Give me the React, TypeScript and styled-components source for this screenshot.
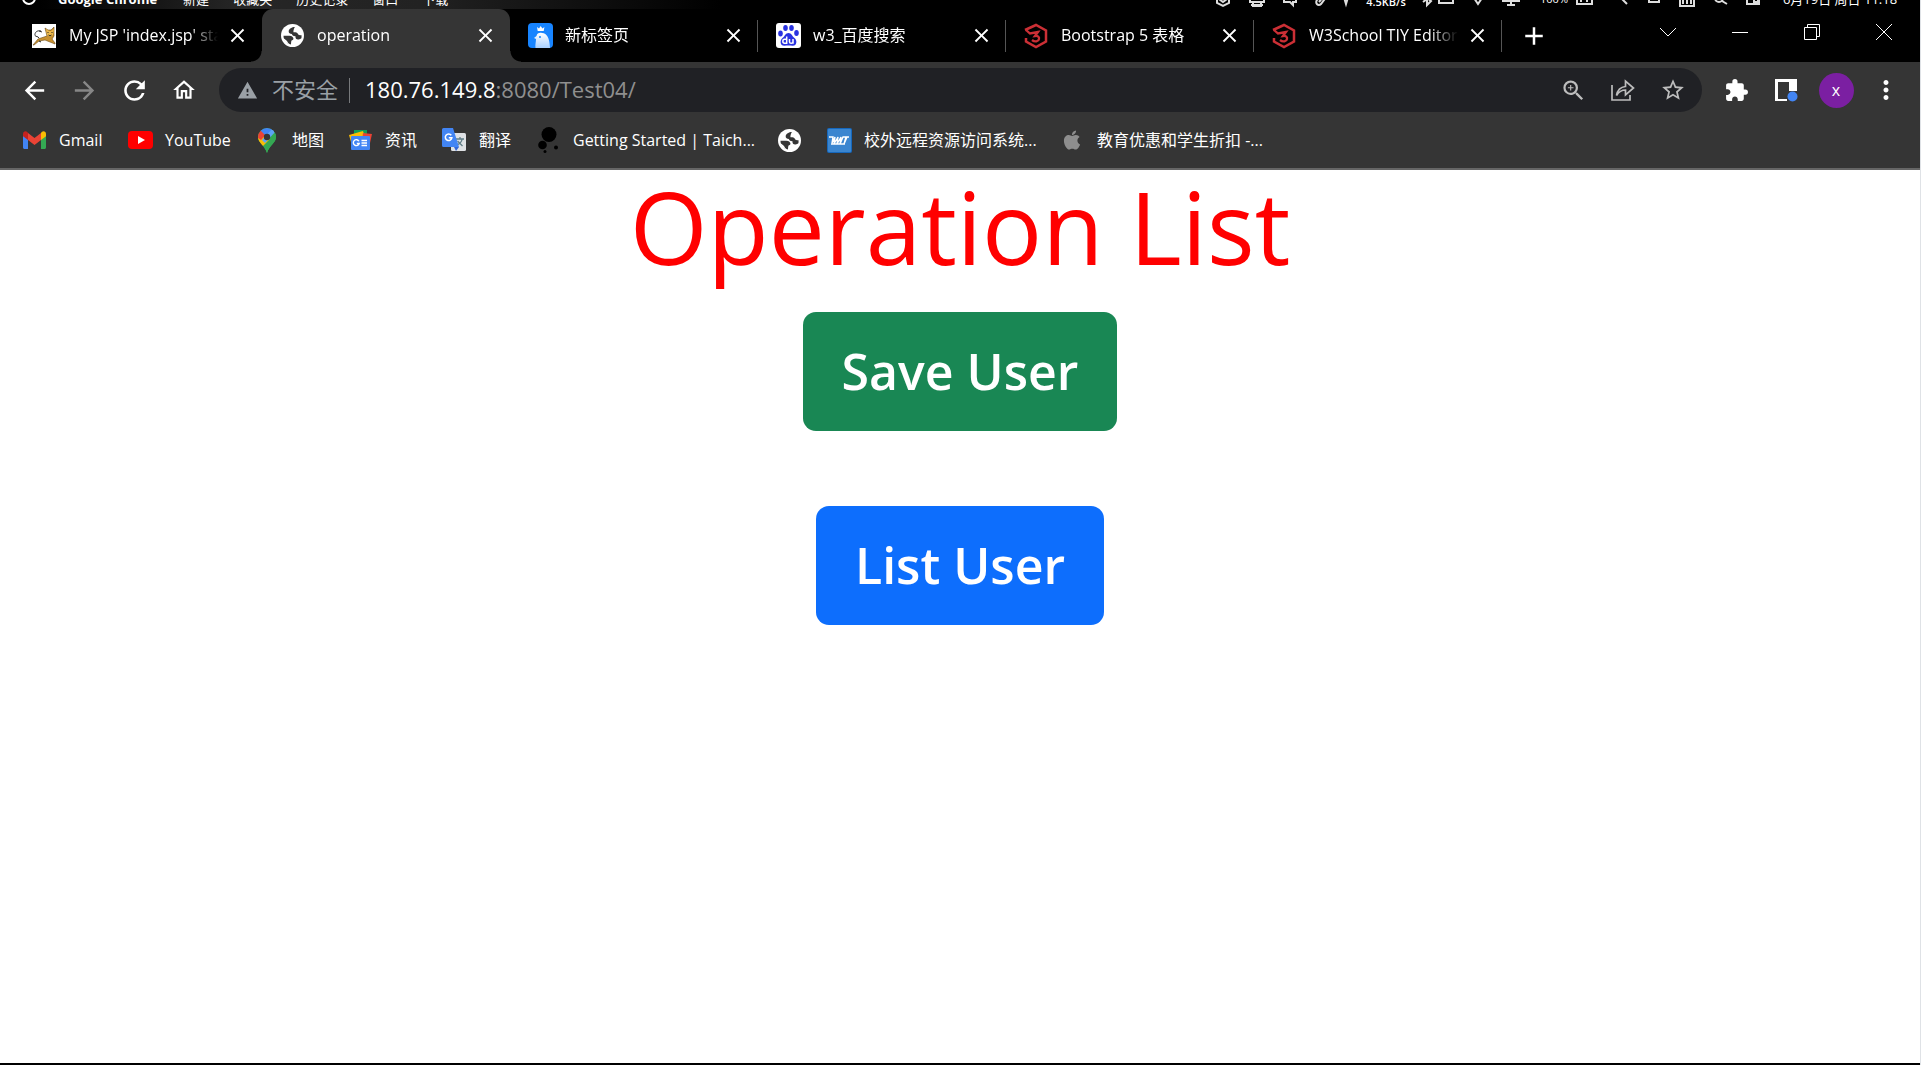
import React from "react";
import styled, { createGlobalStyle } from "styled-components";
import {
  MdArrowBack, MdArrowForward, MdRefresh, MdOutlineHome, MdWarning, MdZoomIn,
  MdStarBorder, MdExtension, MdMoreVert, MdClose, MdAdd,
} from "react-icons/md";
import { FaApple } from "react-icons/fa";

const ui = `"Open Sans", "Noto Sans CJK SC", sans-serif`;

const Global = createGlobalStyle`
  * { box-sizing: border-box; }
  html, body { margin: 0; background: #fff; }
  body { font-family: ${ui}; overflow: hidden; }
  button { font: inherit; color: inherit; background: none; border: 0; padding: 0; cursor: pointer; }
  svg { display: block; flex: none; }
`;

const Screen = styled.div`
  min-height: 100vh;
  display: flex;
  flex-direction: column;
  border-right: 1px solid #dfe2e6;
  color: #fff;
`;

const MenuBar = styled.header`
  height: 9px;
  overflow: hidden;
  display: flex;
  justify-content: space-between;
  align-items: flex-end;
  padding: 0 10px 0 20px;
  background: linear-gradient(90deg, #000 0, #000 40px, #262626 240px, #222 420px, #000 720px);
  font-size: 13px;
  line-height: 20px;
  white-space: nowrap;
`;
const MenuItems = styled.nav`
  display: flex;
  align-items: center;
  gap: 24px;
  height: 20px;
`;
const AppName = styled.strong`
  margin: 0 2px 0 -4px;
  font-weight: 700;
`;
const Tray = styled.div`
  display: flex;
  align-items: center;
  height: 20px;
`;
const TrayCell = styled.span<{ $w: number }>`
  width: ${(p) => p.$w}px;
  display: flex;
  justify-content: center;
`;
const Charge = styled.span`
  width: 46px;
  text-align: right;
  font-size: 11px;
`;
const Speed = styled.span`
  width: 64px;
  height: 20px;
  padding-top: 3px;
  font-size: 11px;
  font-weight: 600;
  text-align: center;
`;

const TabStrip = styled.div`
  height: 53px;
  display: flex;
  background: #000;
  padding-left: 14px;
`;
const Tab = styled.div<{ $active?: boolean; $line?: boolean }>`
  position: relative;
  flex: 0 1 248px;
  min-width: 0;
  display: flex;
  align-items: center;
  gap: 5px;
  padding: 0 13px 0 17px;
  border-radius: 11px 11px 0 0;
  background: ${(p) => (p.$active ? "#353535" : "transparent")};
  &::before, &::after {
    content: ${(p) => (p.$active ? '""' : "none")};
    position: absolute;
    bottom: 0;
    width: 11px;
    height: 11px;
  }
  &::before {
    left: -11px;
    background: radial-gradient(circle at 0 0, transparent 10px, #353535 11px);
  }
  &::after {
    right: -11px;
    background: radial-gradient(circle at 100% 0, transparent 10px, #353535 11px);
  }
  ${(p) => p.$line && `&::after {
    content: ""; right: 0; bottom: 10px; width: 1px; height: 32px; background: #555;
  }`}
`;
const TabTitle = styled.span`
  flex: 1;
  overflow: hidden;
  white-space: nowrap;
  padding: 0 0 1px 7px;
  font-size: 16px;
  line-height: 24px;
  mask-image: linear-gradient(90deg, #000 calc(100% - 32px), transparent calc(100% - 3px));
`;
const IconSlot = styled.span`
  flex: none;
  width: 26px;
  display: flex;
  justify-content: center;
`;
const TabClose = styled.button`
  display: flex;
`;
const NewTab = styled.button`
  width: 64px;
  display: grid;
  place-items: center;
`;
const WindowControls = styled.div`
  margin-left: auto;
  display: flex;
  height: 46px;
`;
const WindowButton = styled.button`
  width: 72px;
  display: grid;
  place-items: center;
`;

const Toolbar = styled.div`
  height: 56px;
  display: flex;
  align-items: center;
  background: #353535;
  padding: 0 9px;
`;
const ToolButton = styled.button<{ $dim?: boolean }>`
  width: 50px;
  height: 44px;
  display: grid;
  place-items: center;
  color: ${(p) => (p.$dim ? "#878787" : "#fff")};
`;
const Omnibox = styled.div`
  flex: 1;
  height: 44px;
  margin: 0 9px 0 10px;
  display: flex;
  align-items: center;
  border-radius: 22px;
  background: #202125;
  padding: 0 4px 0 18px;
  color: #9aa0a6;
  font-size: 22px;
  line-height: 30px;
`;
const Security = styled.button`
  display: flex;
  align-items: center;
  gap: 14px;
  padding-right: 11px;
  margin-right: 15px;
  height: 25px;
  border-right: 1px solid #77797c;
`;
const SecurityLabel = styled.span`
  padding-bottom: 2px;
`;
const Address = styled.a`
  flex: 1;
  padding-bottom: 2px;
  color: #8f8f8f;
  font-size: 22px;
  text-decoration: none;
  b { font-weight: 400; color: #fff; }
`;
const OmniButton = styled.button`
  width: 50px;
  display: grid;
  place-items: center;
  color: #bdbdbd;
`;
const Avatar = styled.span`
  width: 35px;
  height: 35px;
  border-radius: 50%;
  background: #7b1fa2;
  display: grid;
  place-items: center;
  font-size: 16px;
  line-height: 20px;
`;

const Bookmarks = styled.nav`
  height: 52px;
  display: flex;
  align-items: center;
  padding: 0 0 6px 21px;
  background: #353535;
  border-bottom: 2px solid #666;
`;
const Bookmark = styled.a<{ $w: number }>`
  flex: 0 1 ${(p) => p.$w}px;
  min-width: 0;
  display: flex;
  align-items: center;
  gap: 12px;
  color: #fff;
  text-decoration: none;
  white-space: nowrap;
  font-size: 16px;
  line-height: 24px;
`;
const BookmarkLabel = styled.span`
  padding-bottom: 1px;
`;

const Page = styled.main`
  flex: 1;
  display: flex;
  flex-direction: column;
  align-items: center;
  background: #fff;
  border-bottom: 2px solid #000;
`;
const Title = styled.h1`
  margin: 0 0 30px;
  font-size: 100px;
  font-weight: 400;
  line-height: 112px;
  color: #f00;
`;
const Action = styled.button<{ $color: string }>`
  && {
    background: ${(p) => p.$color};
    padding: 0 39px 2px;
    color: #fff;
    font-size: 50px;
    font-weight: 600;
    line-height: 80px;
  }
  height: 119px;
  margin-bottom: 75px;
  border-radius: 13px;
`;

const Globe = () => (
  <svg width="23" height="23" viewBox="0 0 24 24">
    <circle cx="12" cy="12" r="12" fill="#fff" />
    <path d="M14.500 3.200c-3 0-6.300 1.800-6.500 4.300-.1 2 1.500 2.800 3.300 3 .6 1.700 2 2.300 3.800 2.200-.2 2.300 1 3.600 3.200 3.400 1.300-.1 2.300-.6 3-1.300.3-1.500.2-2.300-.1-3.300-1.800.5-3 .1-3.600-1.300-1-1.500-2.800-1.700-4.600-1.500-.2-1.800.4-3.700 1.500-5.500z" fill="#353535" />
    <path d="M2.600 12.300h6.200c2.700.3 4.200 1.400 4.200 3.200-.2 1.200-1.200 1.600-2.200 1.900-.3 1.200-.2 2.400-.4 4C5.800 20.800 2.700 17 2.600 12.300z" fill="#353535" />
    <path d="M2.600 14.500c1.500 1.700 3 2 4 3.800.5 1.200 1.200 2 2.400 2.800C5.500 20.300 3 18 2.600 14.500z" fill="#fff" />
  </svg>
);
const Cat = () => (
  <svg width="24" height="24" viewBox="0 0 24 24">
    <path fill="#fff" d="M0 0h24v24H0z" />
    <path d="M9 7C5 6 2.500 8.500 3 11.500c1 1.500 3 .5 4 2.500M7 7l3 1" stroke="#333" fill="none" />
    <path d="M1 21l5-6 6-2 3-1-2-8 3 2h3l3-3v9l-2 3 3 4v1l-5-2-5-2-6 1-5 4z" fill="#c8912f" stroke="#6b4a16" strokeWidth=".6" />
    <path d="M14 5l3 2h2l3-2-1 6-3 2-3-2z" fill="#ecb94c" />
    <path d="M15.500 8l1 1M20.500 8l-1 1M16.500 11l1.500 1 1.500-1M7 17l2 1" stroke="#222" fill="none" />
  </svg>
);
const Bird = () => (
  <svg width="25" height="25" viewBox="0 0 25 25">
    <defs><linearGradient id="bird" x2="0" y2="1"><stop stopColor="#fff" /><stop offset="1" stopColor="#a8d0ff" /></linearGradient></defs>
    <rect width="25" height="25" rx="4" fill="#1784ff" />
    <path d="M9 4l2 1.500L12.700 3l1.700 2.500 2-1.500-.7 4h-6z" fill="#fff" />
    <path d="M6 15l2.500-2c.5-3 3-3.500 5.500-3 5 .5 7.500 4.500 8 15H7.500c-.5-3 .5-6 .5-9z" fill="url(#bird)" />
    <circle cx="12" cy="14" r="1" fill="#1784ff" />
  </svg>
);
const Baidu = () => (
  <svg width="25" height="25" viewBox="0 0 25 25">
    <rect width="25" height="25" rx="3" fill="#fff" />
    <g fill="#2932e1">
      <ellipse cx="4.500" cy="10.500" rx="2.300" ry="3" /><ellipse cx="9.500" cy="5" rx="2.300" ry="3" />
      <ellipse cx="15.500" cy="5" rx="2.300" ry="3" /><ellipse cx="20.500" cy="10" rx="2.300" ry="3" />
      <path d="M12.500 10c3 0 3.500 3 6 5 3 2.500 2.500 8-2 7.800-3-.3-5-.3-8 0-4.500.2-5-5.300-2-7.800 2.500-2 3-5 6-5z" />
    </g>
    <path d="M10.700 13.500v6.800H8.500c-2.200 0-2.200-4 0-4h2.200M13.500 16v3c0 1.800 3.500 1.800 3.500 0v-3 4.800" fill="none" stroke="#fff" strokeWidth="1.500" />
  </svg>
);
const W3 = () => (
  <svg width="24" height="26" viewBox="0 0 24 26" fill="none" stroke="#cb2f35" strokeWidth="2.500">
    <path d="M1 7L12 2l10 5.500v11L12 24 2 18.500V15" />
    <path d="M2 7l4 3.500 8-1.500-3 4c3-.5 4.500 1 4 3-.5 2.500-4 3.500-7 1" strokeWidth="2.300" />
  </svg>
);
const Gmail = () => (
  <svg width="23" height="18" viewBox="0 0 23 18">
    <path d="M0 4v12.500C0 17.300.7 18 1.500 18H5V8z" fill="#4285f4" />
    <path d="M18 8v10h3.500c.8 0 1.500-.7 1.500-1.500V4z" fill="#34a853" />
    <path d="M18 2v7l5-3.700V3c0-2.500-2.500-3.500-4.300-2z" fill="#fbbc04" />
    <path d="M5 9V2l6.500 5L18 2v7l-6.500 5z" fill="#ea4335" />
    <path d="M0 3v2.300L5 9V2L4.300 1C2.500-.5 0 .5 0 3z" fill="#c5221f" />
  </svg>
);
const YouTube = () => (
  <svg width="25" height="18" viewBox="0 0 25 18">
    <rect width="25" height="18" rx="4" fill="#f00" /><path d="M10 5l7 4-7 4z" fill="#fff" />
  </svg>
);
const MapPin = () => (
  <svg width="18" height="25" viewBox="0 0 18 25">
    <defs><clipPath id="pin"><path d="M9 0a9 9 0 0 1 9 9c0 6-6.500 8-9 16C6.500 17 0 15 0 9a9 9 0 0 1 9-9z" /></clipPath></defs>
    <g clipPath="url(#pin)">
      <path fill="#34a853" d="M0 0h18v25H0z" /><path fill="#fbbc04" d="M0 16V8l6-3 6 6-8 8z" />
      <path fill="#ea4335" d="M0 10V0l8 6-5 6z" /><path fill="#4285f4" d="M2 2l5 5 10-4V0H2z" /><path fill="#5da3f5" d="M18 3L7 15l-3-3L15 0h3z" />
      <path fill="#34a853" d="M18 5L4 20v5h14z" />
    </g>
    <circle cx="9" cy="9" r="3.200" fill="#353535" />
  </svg>
);
const News = () => (
  <svg width="23" height="20" viewBox="0 0 23 20">
    <path fill="#0f9d58" d="M5 0h13v8H5z" /><path fill="#fbbc04" d="M0 5l14-4 2 6L2 12z" /><path fill="#ea4335" d="M14 3l9 1-2 9-8-1z" />
    <rect x="2" y="6" width="19" height="14" rx="1" fill="#4285f4" />
    <path d="M10 11.300a3 3 0 1 0 .2 2.200H7.800M12.500 10.500H18M12.500 13H18M12.500 15.500H18" fill="none" stroke="#fff" strokeWidth="1.400" />
  </svg>
);
const Translate = () => (
  <svg width="24" height="24" viewBox="0 0 24 24">
    <rect x="9" y="5" width="15" height="18" rx="1.500" fill="#dfe2e5" />
    <path d="M14 11h8M18 9v2M20 11c0 3-3 5-5 6M15.500 13l5 5" stroke="#5f7d86" fill="none" strokeWidth="1.300" />
    <path d="M12 19h5l-3 4z" fill="#3367d6" />
    <path d="M1.500 0H11l6 19H1.500A1.500 1.500 0 0 1 0 17.500v-16A1.500 1.500 0 0 1 1.500 0z" fill="#4285f4" />
    <path d="M9.300 7.300a3.300 3.300 0 1 0 .6 2.400H6.800" fill="none" stroke="#fff" strokeWidth="1.500" />
  </svg>
);
const Taichi = () => (
  <svg width="20" height="26" viewBox="0 0 20 26">
    <circle cx="11" cy="7.500" r="7.500" /><circle cx="4.500" cy="18" r="4.300" /><circle cx="18" cy="20.500" r="2" /><circle cx="7" cy="24.500" r="1.500" />
  </svg>
);
const Campus = () => (
  <svg width="25" height="25" viewBox="0 0 25 25">
    <rect width="25" height="25" rx="2" fill="#1668bd" /><rect x="1" y="1" width="23" height="23" rx="1" fill="#3b86d0" />
    <path d="M2 9h4l-1 6 3-6-1 7 4-7-1 7 4-7-1 7 3-7h3l-2 7 3-7h2M4 16h14" stroke="#fff" strokeWidth="1.400" fill="none" />
  </svg>
);
const Share = () => (
  <svg width="24" height="24" viewBox="0 0 24 24" fill="none" stroke="currentColor" strokeWidth="1.700">
    <path d="M1 7v15h18v-5" /><path d="M5.500 17.500c1-6 4-8.500 9-9V3l8 7-8 7v-5c-4 0-6.500 1.500-9 5.500z" />
  </svg>
);
const SidePanel = () => (
  <svg width="23" height="23" viewBox="0 0 23 23">
    <path fill="#fff" d="M0 0h22v12h-8V3H3v17h9v2H0z" /><circle cx="17.500" cy="17.500" r="5" fill="#4285f4" />
  </svg>
);
const winIcons: Record<string, string> = {
  "Search tabs": "M0 4l8 8 8-8",
  Minimize: "M0 8.500h16",
  Restore: "M.5 3.500h12v12H.5zM3.500 3.500v-3h12v12h-3",
  Close: "M0 0l16 16M16 0L0 16",
};

type TrayIcon = [number, string];
const appIcons: TrayIcon[] = [
  [34, "M3 4l6-3 6 3v9l-6 3-6-3zM5 9l4 3 4-3"],
  [34, "M2 5h14v7H2zM5 12v4h8v-4M3 15h12"],
  [32, "M3 3h12v9h-3v3l-3-3H3z"],
  [32, "M14 6l-6 8c-3 3-6-1-4-4l5-7M6 12l5-6"],
  [16, "M6 4h6l-3 10z"],
];
const deviceIcons: TrayIcon[] = [
  [18, "M9 2l4 4-8 6M9 2v13l4-4-8-6"],
  [20, "M2 4h14v9H2zM3 8h12"],
  [44, "M3 5c4-3 8-3 12 0l-6 9z"],
  [22, "M1 3h16v8H1zM9 11v4M5 15h8"],
];
const systemIcons: TrayIcon[] = [
  [34, "M1 5h15v9H1zM5 7v5M11 7v5"],
  [36, "M3 8l4-4M8 6l8 8"],
  [32, "M4 4h10v8H4z"],
  [34, "M2 2h14v14H2zM5 10v4M9 10v4M13 10v4"],
  [32, "M12 8a4 4 0 1 1-8 0 4 4 0 0 1 8 0zM11 11l5 3"],
  [34, "M3 4h12v10H3zM10 8h4v4h-4z"],
];
const TrayIcons = ({ icons }: { icons: TrayIcon[] }) => (
  <>
    {icons.map(([w, d]) => (
      <TrayCell key={d} $w={w}>
        <svg width="18" height="18" viewBox="0 0 18 18" fill="none" stroke="#ddd" strokeWidth="2"><path d={d} /></svg>
      </TrayCell>
    ))}
  </>
);

const tabs = [
  { icon: <Cat />, title: "My JSP 'index.jsp' starting page" },
  { icon: <Globe />, title: "operation", active: true },
  { icon: <Bird />, title: "新标签页", line: true },
  { icon: <Baidu />, title: "w3_百度搜索", line: true },
  { icon: <W3 />, title: "Bootstrap 5 表格", line: true },
  { icon: <W3 />, title: "W3School TIY Editor", line: true },
];
const bookmarks = [
  { icon: <Gmail />, label: "Gmail", w: 106 },
  { icon: <YouTube />, label: "YouTube", w: 127 },
  { icon: <MapPin />, label: "地图", w: 93 },
  { icon: <News />, label: "资讯", w: 94 },
  { icon: <Translate />, label: "翻译", w: 94 },
  { icon: <Taichi />, label: "Getting Started | Taich...", w: 241 },
  { icon: <Globe />, label: "", w: 50 },
  { icon: <Campus />, label: "校外远程资源访问系统...", w: 233 },
  { icon: <FaApple size={22} color="#8e8e8e" />, label: "教育优惠和学生折扣 -...", w: 240 },
];

export default function App() {
  return (
    <Screen>
      <Global />
      <MenuBar>
        <MenuItems>
          <svg width="18" height="18" viewBox="0 0 18 18" fill="none" stroke="#fff" strokeWidth="2"><circle cx="9" cy="8" r="6" /></svg>
          <AppName>Google Chrome</AppName>
          <span>新建</span><span>收藏夹</span><span>历史记录</span><span>窗口</span><span>下载</span>
        </MenuItems>
        <Tray>
          <TrayIcons icons={appIcons} />
          <Speed>4.5KB/s</Speed>
          <TrayIcons icons={deviceIcons} />
          <Charge>100%</Charge>
          <TrayIcons icons={systemIcons} />
          <TrayCell $w={140}>6月19日 周日 11:18</TrayCell>
        </Tray>
      </MenuBar>
      <TabStrip>
        {tabs.map((t) => (
          <Tab key={t.title} $active={t.active} $line={t.line}>
            <IconSlot>{t.icon}</IconSlot>
            <TabTitle>{t.title}</TabTitle>
            <TabClose aria-label="Close tab"><MdClose size={23} /></TabClose>
          </Tab>
        ))}
        <NewTab aria-label="New tab"><MdAdd size={30} stroke="#fff" /></NewTab>
        <WindowControls>
          {Object.entries(winIcons).map(([name, d]) => (
            <WindowButton key={name} aria-label={name}>
              <svg width="16" height="16" viewBox="0 0 16 16" fill="none" stroke="#fff"><path d={d} /></svg>
            </WindowButton>
          ))}
        </WindowControls>
      </TabStrip>
      <Toolbar>
        <ToolButton aria-label="Back"><MdArrowBack size={29} /></ToolButton>
        <ToolButton aria-label="Forward" $dim><MdArrowForward size={29} /></ToolButton>
        <ToolButton aria-label="Reload"><MdRefresh size={31} /></ToolButton>
        <ToolButton aria-label="Home"><MdOutlineHome size={26} /></ToolButton>
        <Omnibox>
          <Security><MdWarning size={21} /><SecurityLabel>不安全</SecurityLabel></Security>
          <Address href="#"><b>180.76.149.8</b>:8080/Test04/</Address>
          <OmniButton aria-label="Zoom"><MdZoomIn size={27} /></OmniButton>
          <OmniButton aria-label="Share"><Share /></OmniButton>
          <OmniButton aria-label="Bookmark"><MdStarBorder size={26} /></OmniButton>
        </Omnibox>
        <ToolButton aria-label="Extensions"><MdExtension size={25} /></ToolButton>
        <ToolButton aria-label="Side panel"><SidePanel /></ToolButton>
        <ToolButton aria-label="Profile"><Avatar>x</Avatar></ToolButton>
        <ToolButton aria-label="Menu"><MdMoreVert size={30} /></ToolButton>
      </Toolbar>
      <Bookmarks>
        {bookmarks.map((b, i) => (
          <Bookmark key={i} href="#" $w={b.w} aria-label={b.label || "Bookmark"}>
            <IconSlot>{b.icon}</IconSlot>
            {b.label && <BookmarkLabel>{b.label}</BookmarkLabel>}
          </Bookmark>
        ))}
      </Bookmarks>
      <Page>
        <Title>Operation List</Title>
        <Action $color="#198754">Save User</Action>
        <Action $color="#0d6efd">List User</Action>
      </Page>
    </Screen>
  );
}
